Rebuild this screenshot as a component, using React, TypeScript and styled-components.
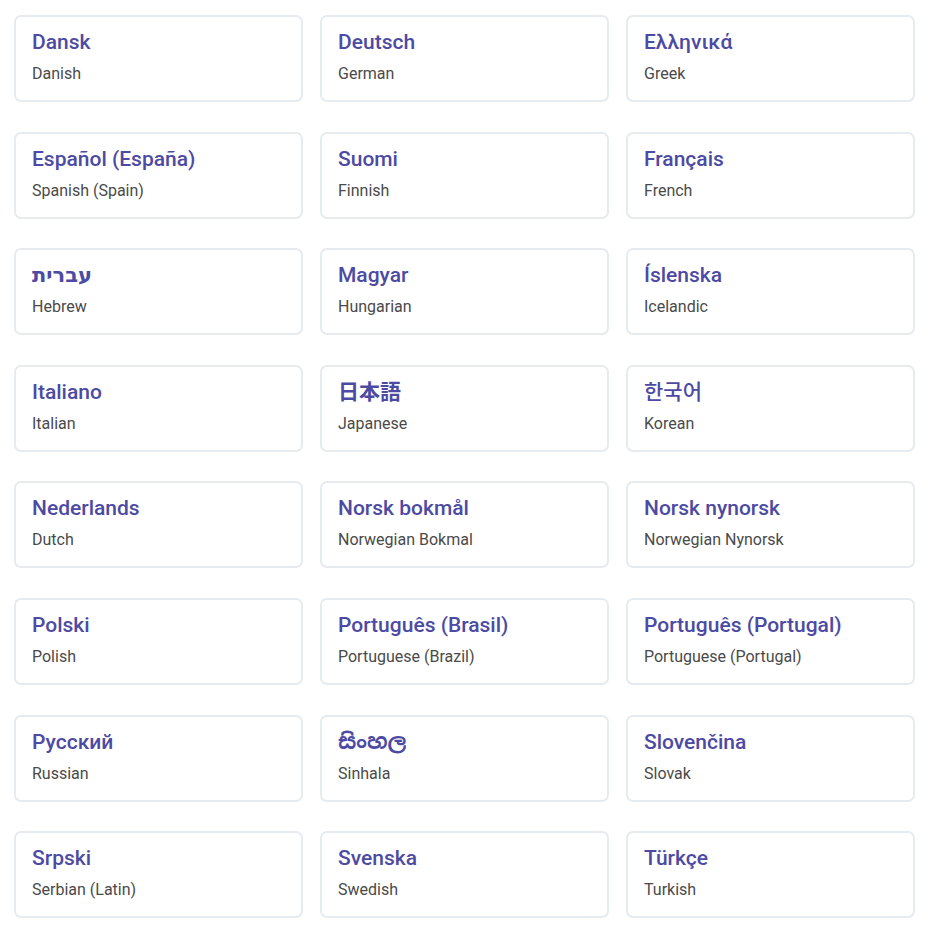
import React from "react";
import styled, { createGlobalStyle } from "styled-components";

const GlobalStyle = createGlobalStyle`
  html, body {
    margin: 0;
    padding: 0;
    background: #ffffff;
  }
  body {
    font-family: Roboto, "Noto Sans", "Noto Sans CJK JP", "Noto Sans CJK KR", sans-serif;
  }
`;

const Grid = styled.div`
  display: grid;
  grid-template-columns: repeat(3, 1fr);
  column-gap: 17px;
  row-gap: 29.6px;
  padding: 15px 16px 0 14px;
`;

const Card = styled.a`
  display: flex;
  flex-direction: column;
  height: 87px;
  box-sizing: border-box;
  border: 2px solid #e6ebf0;
  border-radius: 7px;
  padding: 13px 16px 0 16px;
  background: #fff;
  text-decoration: none;
`;

const Title = styled.div<{ $heavy?: boolean }>`
  font-family: Roboto, "Noto Sans", "Noto Sans Sinhala", "DejaVu Sans", "Noto Sans CJK JP", "Noto Sans CJK KR", sans-serif;
  font-weight: ${(p) => (p.$heavy ? 700 : 500)};
  font-size: 21px;
  line-height: 24px;
  color: #4d4aa3;
  white-space: nowrap;
`;

const Subtitle = styled.div`
  margin-top: 10px;
  font-family: Roboto, "Noto Sans", sans-serif;
  font-weight: 400;
  font-size: 16px;
  line-height: 20px;
  color: #4a4a4a;
  white-space: nowrap;
`;

const languages: { name: string; english: string; lang: string; heavy?: boolean }[] = [
  { name: "Dansk", english: "Danish", lang: "da" },
  { name: "Deutsch", english: "German", lang: "de" },
  { name: "Ελληνικά", english: "Greek", lang: "el" },
  { name: "Español (España)", english: "Spanish (Spain)", lang: "es" },
  { name: "Suomi", english: "Finnish", lang: "fi" },
  { name: "Français", english: "French", lang: "fr" },
  { name: "עברית", english: "Hebrew", lang: "he", heavy: true },
  { name: "Magyar", english: "Hungarian", lang: "hu" },
  { name: "Íslenska", english: "Icelandic", lang: "is" },
  { name: "Italiano", english: "Italian", lang: "it" },
  { name: "日本語", english: "Japanese", lang: "ja", heavy: true },
  { name: "한국어", english: "Korean", lang: "ko" },
  { name: "Nederlands", english: "Dutch", lang: "nl" },
  { name: "Norsk bokmål", english: "Norwegian Bokmal", lang: "nb" },
  { name: "Norsk nynorsk", english: "Norwegian Nynorsk", lang: "nn" },
  { name: "Polski", english: "Polish", lang: "pl" },
  { name: "Português (Brasil)", english: "Portuguese (Brazil)", lang: "pt-BR" },
  { name: "Português (Portugal)", english: "Portuguese (Portugal)", lang: "pt-PT" },
  { name: "Русский", english: "Russian", lang: "ru" },
  { name: "සිංහල", english: "Sinhala", lang: "si", heavy: true },
  { name: "Slovenčina", english: "Slovak", lang: "sk" },
  { name: "Srpski", english: "Serbian (Latin)", lang: "sr" },
  { name: "Svenska", english: "Swedish", lang: "sv" },
  { name: "Türkçe", english: "Turkish", lang: "tr" },
];

export default function App() {
  return (
    <>
      <GlobalStyle />
      <Grid>
        {languages.map((l) => (
          <Card key={l.lang} href="#">
            <Title lang={l.lang} $heavy={l.heavy}>
              {l.name}
            </Title>
            <Subtitle>{l.english}</Subtitle>
          </Card>
        ))}
      </Grid>
    </>
  );
}
